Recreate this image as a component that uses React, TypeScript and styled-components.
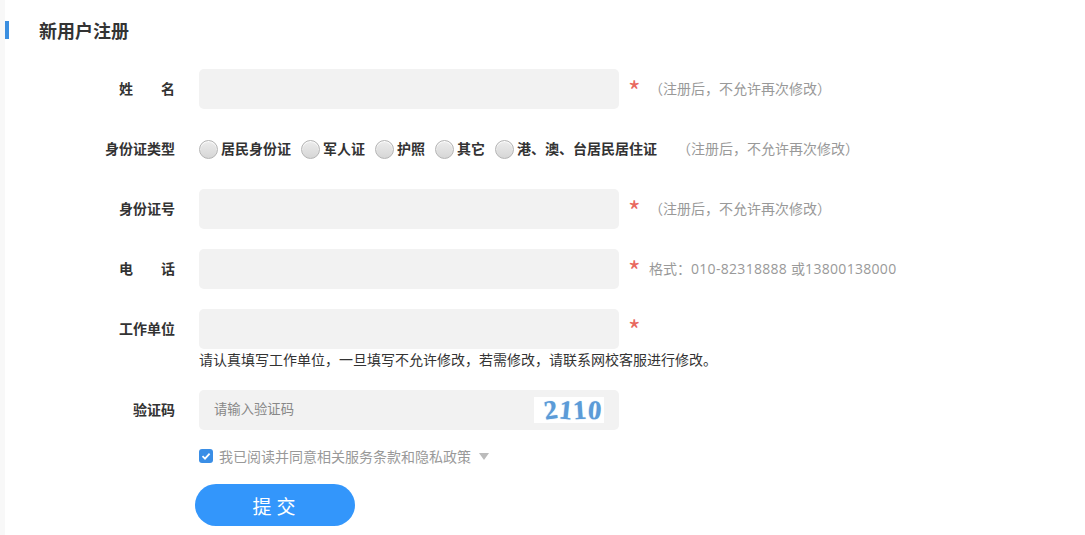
import React from "react";
import styled, { createGlobalStyle } from "styled-components";

const Global = createGlobalStyle`
  html, body { margin: 0; padding: 0; background: #fff; height: 100%; overflow: hidden; }
  body { font-family: "Noto Sans CJK SC", "Noto Sans", sans-serif; color: #333; }
`;
const Page = styled.div`
  display: flex;
  width: 1085px;
  height: 535px;
  overflow: hidden;
`;
const Strip = styled.div`
  width: 5px;
  flex: none;
  background: #f8f8f8;
`;
const Main = styled.main`
  flex: 1;
  display: flex;
  flex-direction: column;
`;
const Heading = styled.h1`
  margin: 21px 0 30px;
  height: 18px;
  border-left: 4px solid #3b8fe0;
  padding-left: 30px;
  font-size: 18px;
  line-height: 19px;
  font-weight: 700;
  color: #333;
`;
const Row = styled.div<{ $mb?: number }>`
  display: flex;
  align-items: center;
  height: 40px;
  margin-bottom: ${(p) => p.$mb ?? 20}px;
`;
const Label = styled.label`
  width: 170px;
  flex: none;
  margin-right: 24px;
  padding-bottom: 2px;
  text-align: right;
  font-size: 14px;
  font-weight: 700;
  color: #333;
  white-space: pre;
`;
const Field = styled.input`
  width: 420px;
  height: 40px;
  flex: none;
  box-sizing: border-box;
  border: 0;
  border-radius: 5px;
  background: #f2f2f2;
  outline: none;
`;
const Star = styled.span<{ $top?: number }>`
  margin-left: 9px;
  width: 21px;
  flex: none;
  font-size: 27px;
  line-height: 24px;
  color: #e8695f;
  position: relative;
  top: ${(p) => p.$top ?? 2}px;
`;
const Hint = styled.span<{ $ml?: number }>`
  margin-left: ${(p) => p.$ml ?? 0}px;
  padding-bottom: 2px;
  font-size: 14px;
  color: #999;
  white-space: nowrap;
`;
const Digits = styled.span`
  font-family: "Open Sans", sans-serif;
  letter-spacing: 0.3px;
`;
const Radio = styled.span`
  width: 19px;
  height: 19px;
  flex: none;
  box-sizing: border-box;
  border: 1px solid #b4b4b4;
  border-radius: 50%;
  background: linear-gradient(#ececec, #d6d6d6);
  box-shadow: inset 0 1px 1px #fff;
`;
const RadioGroup = styled.div`
  display: flex;
  align-items: center;
  gap: 10px;
`;
const RadioItem = styled.span`
  display: flex;
  align-items: center;
  gap: 3px;
  font-size: 14px;
  font-weight: 700;
  color: #333;
  white-space: nowrap;
`;
const RadioText = styled.span`
  padding-bottom: 2px;
`;
const Note = styled.p`
  margin: 1px 0 22px 194px;
  height: 18px;
  font-size: 14px;
  line-height: 18px;
  color: #333;
`;
const CaptchaBox = styled.div`
  width: 420px;
  height: 40px;
  box-sizing: border-box;
  display: flex;
  align-items: center;
  justify-content: space-between;
  padding: 0 15px;
  border-radius: 5px;
  background: #f2f2f2;
`;
const Placeholder = styled.span`
  padding-bottom: 3px;
  font-size: 13.33px;
  color: #888;
`;
const CaptchaImage = styled.span`
  width: 70px;
  height: 26px;
  background: #fff;
  display: flex;
  align-items: center;
  justify-content: flex-end;
  padding-right: 3px;
  box-sizing: border-box;
  font-family: "Liberation Serif", serif;
  font-size: 27px;
  font-weight: 700;
  color: #5b9bd8;
  text-shadow: 0 0 1px #8dbbe6;
`;
const CaptchaDigit = styled.span<{ $tilt: number }>`
  display: inline-block;
  margin-left: 1px;
  transform: rotate(${(p) => p.$tilt}deg);
`;
const Agree = styled.div`
  display: flex;
  align-items: center;
  height: 18px;
  margin: 17px 0 19px 194px;
  font-size: 14px;
  color: #999;
`;
const Check = styled.span`
  width: 14px;
  height: 14px;
  border-radius: 3px;
  background: #3a8ee6;
  margin-right: 6px;
  display: flex;
  align-items: center;
  justify-content: center;
`;
const Caret = styled.span`
  width: 0;
  height: 0;
  margin-left: 8px;
  border-left: 5px solid transparent;
  border-right: 5px solid transparent;
  border-top: 7px solid #bbb;
`;
const Submit = styled.button`
  width: 160px;
  height: 42px;
  margin-left: 190px;
  padding: 0 0 0 3px;
  border: 0;
  border-radius: 21px;
  background: #3396fb;
  color: #fff;
  font-family: inherit;
  font-size: 19px;
  letter-spacing: 5px;
`;

const lockHint = "（注册后，不允许再次修改）";
const radios = ["居民身份证", "军人证", "护照", "其它", "港、澳、台居民居住证"];
const captcha: [string, number][] = [["2", -8], ["1", 6], ["1", -4], ["0", 5]];

export default function App() {
  return (
    <Page>
      <Global />
      <Strip />
      <Main>
        <Heading>新用户注册</Heading>
        <Row>
          <Label>姓{"　　"}名</Label>
          <Field />
          <Star>*</Star>
          <Hint>{lockHint}</Hint>
        </Row>
        <Row>
          <Label>身份证类型</Label>
          <RadioGroup>
            {radios.map((r) => (
              <RadioItem key={r}>
                <Radio />
                <RadioText>{r}</RadioText>
              </RadioItem>
            ))}
          </RadioGroup>
          <Hint $ml={20}>{lockHint}</Hint>
        </Row>
        <Row>
          <Label>身份证号</Label>
          <Field />
          <Star>*</Star>
          <Hint>{lockHint}</Hint>
        </Row>
        <Row>
          <Label>电{"　　"}话</Label>
          <Field />
          <Star>*</Star>
          <Hint>
            格式：<Digits>010-82318888 </Digits>或<Digits>13800138000</Digits>
          </Hint>
        </Row>
        <Row $mb={0}>
          <Label>工作单位</Label>
          <Field />
          <Star $top={1}>*</Star>
        </Row>
        <Note>请认真填写工作单位，一旦填写不允许修改，若需修改，请联系网校客服进行修改。</Note>
        <Row $mb={0}>
          <Label>验证码</Label>
          <CaptchaBox>
            <Placeholder>请输入验证码</Placeholder>
            <CaptchaImage>
              {captcha.map(([d, tilt], i) => (
                <CaptchaDigit key={i} $tilt={tilt}>
                  {d}
                </CaptchaDigit>
              ))}
            </CaptchaImage>
          </CaptchaBox>
        </Row>
        <Agree>
          <Check>
            <svg width="10" height="10" viewBox="0 0 10 10" fill="none" stroke="#fff" strokeWidth="1.8">
              <path d="M1.5 5.2 4 7.6 8.6 2.6" />
            </svg>
          </Check>
          我已阅读并同意相关服务条款和隐私政策
          <Caret />
        </Agree>
        <Submit>提交</Submit>
      </Main>
    </Page>
  );
}
